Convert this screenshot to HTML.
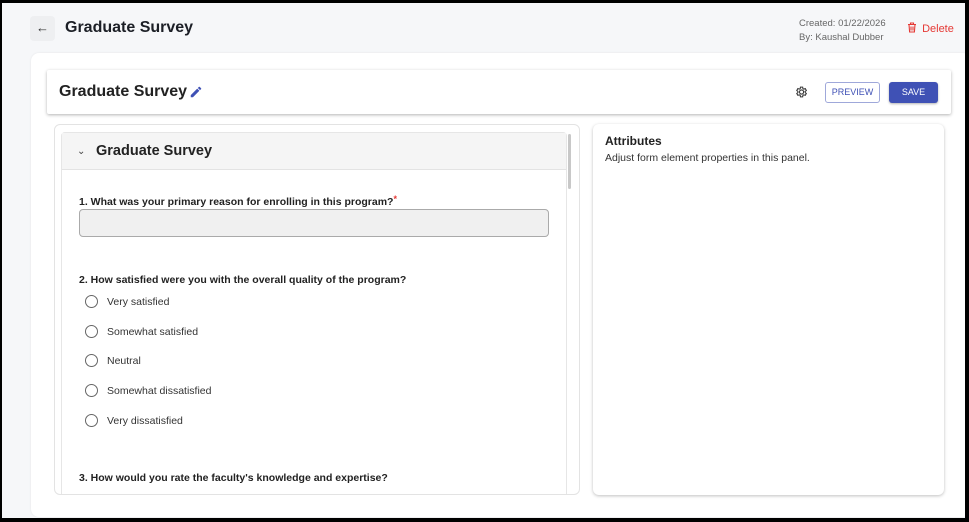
<!DOCTYPE html>
<html><head><style>
*{box-sizing:border-box;margin:0;padding:0}
body{width:969px;height:522px;overflow:hidden;font-family:"Liberation Sans",Arial,sans-serif;background:#000;position:relative}
.frame{position:absolute;left:2px;top:3px;width:963px;height:515px;background:#f6f7f9;overflow:hidden}
.abs{position:absolute}
</style></head><body>
<div class="frame">
  <div class="abs" style="left:28px;top:13px;width:25px;height:25px;background:#eeeff1;border-radius:4px;font-size:13px;color:#333;text-align:center;line-height:24px">←</div>
  <div class="abs" style="left:63px;top:16px;font-size:16px;font-weight:bold;color:#1c1f26">Graduate Survey</div>
  <div class="abs" style="left:797px;top:14px;font-size:9.5px;color:#666;line-height:14px">Created: 01/22/2026<br>By: Kaushal Dubber</div>
  <div class="abs" style="left:905px;top:19px;font-size:11px;color:#e53935">
    <svg width="10" height="11" viewBox="0 0 10 11" style="vertical-align:-1px"><path d="M1 2.5h8M3.5 2.5V1h3v1.5M2 2.5l.6 7.5h4.8L8 2.5M4 4.5v4M6 4.5v4" fill="none" stroke="#e53935" stroke-width="1.1"/></svg>
    <span style="margin-left:2px">Delete</span></div>
  <div class="abs" style="left:29px;top:50px;width:940px;height:464px;background:#fff;border-radius:8px;box-shadow:0 0 2px rgba(0,0,0,.08)"></div>
  <div class="abs" style="left:45px;top:67px;width:904px;height:44px;background:#fff;box-shadow:0 1px 3px rgba(0,0,0,.3);border-radius:2px"></div>
  <div class="abs" style="left:57px;top:80px;font-size:16px;font-weight:bold;color:#222">Graduate Survey</div>
  <svg class="abs" style="left:187px;top:82px" width="14" height="14" viewBox="0 0 24 24"><path d="M3 17.25V21h3.75L17.81 9.94l-3.75-3.75L3 17.25zM20.71 7.04a1 1 0 000-1.41l-2.34-2.34a1 1 0 00-1.41 0l-1.83 1.83 3.75 3.75 1.83-1.83z" fill="#3f51b5"/></svg>
  <svg class="abs" style="left:792px;top:82px" width="14" height="14" viewBox="0 0 24 24"><path d="M19.14 12.94a7 7 0 000-1.88l2.03-1.58-1.92-3.32-2.39.96a7 7 0 00-1.62-.94L14.87 3.6h-3.84l-.36 2.54c-.59.24-1.13.55-1.62.94l-2.39-.96-1.920 3.32 2.03 1.58a7 7 0 000 1.88l-2.03 1.58 1.92 3.32 2.39-.96c.49.39 1.03.7 1.62.94l.36 2.54h3.84l.36-2.54c.59-.24 1.13-.55 1.62-.94l2.39.96 1.92-3.32-2.03-1.58zM12.95 15.5a3.5 3.5 0 110-7 3.5 3.5 0 010 7z" fill="none" stroke="#333" stroke-width="1.8"/></svg>
  <div class="abs" style="left:823px;top:79px;width:55px;height:21px;border:1px solid #9fa8da;border-radius:3px;font-size:9px;color:#3f51b5;text-align:center;line-height:19px">PREVIEW</div>
  <div class="abs" style="left:887px;top:79px;width:49px;height:21px;background:#3f51b5;border-radius:3px;font-size:9px;color:#fff;text-align:center;line-height:21px;box-shadow:0 1px 2px rgba(0,0,0,.3)">SAVE</div>

  <div class="abs" style="left:52px;top:121px;width:526px;height:371px;border:1px solid #e3e3e3;border-radius:6px;background:#fff;overflow:hidden">
    <div class="abs" style="left:6px;top:7px;width:506px;height:370px;border:1px solid #e6e6e6;border-radius:4px">
      <div style="height:37px;background:#f5f5f5;border-bottom:1px solid #e3e3e3;font-size:14.5px;font-weight:bold;color:#222;line-height:37px;padding-left:34px;position:relative"><span style="position:absolute;left:15px;top:0;font-size:10px;font-weight:normal;color:#444">⌄</span>Graduate Survey</div>
    </div>
    <div class="abs" style="left:513px;top:9px;width:3px;height:55px;background:#c8c8c8;border-radius:2px"></div>
    <div class="abs" style="left:24px;top:69px;font-size:10.5px;font-weight:bold;color:#222">1. What was your primary reason for enrolling in this program?<span style="color:#e53935;font-size:9px;vertical-align:3px">*</span></div>
    <div class="abs" style="left:24px;top:84px;width:470px;height:28px;background:#f0f0f0;border:1px solid #aaa;border-radius:4px"></div>
    <div class="abs" style="left:24px;top:149px;font-size:10.5px;font-weight:bold;color:#222">2. How satisfied were you with the overall quality of the program?</div>
    <div class="abs" style="left:30px;top:163px;font-size:10.5px;color:#333;line-height:29.7px">
      <div><span style="display:inline-block;width:13px;height:13px;border:1.5px solid #666;border-radius:50%;vertical-align:-3px;margin-right:9px"></span>Very satisfied</div>
      <div><span style="display:inline-block;width:13px;height:13px;border:1.5px solid #666;border-radius:50%;vertical-align:-3px;margin-right:9px"></span>Somewhat satisfied</div>
      <div><span style="display:inline-block;width:13px;height:13px;border:1.5px solid #666;border-radius:50%;vertical-align:-3px;margin-right:9px"></span>Neutral</div>
      <div><span style="display:inline-block;width:13px;height:13px;border:1.5px solid #666;border-radius:50%;vertical-align:-3px;margin-right:9px"></span>Somewhat dissatisfied</div>
      <div><span style="display:inline-block;width:13px;height:13px;border:1.5px solid #666;border-radius:50%;vertical-align:-3px;margin-right:9px"></span>Very dissatisfied</div>
    </div>
    <div class="abs" style="left:24px;top:347px;font-size:10.5px;font-weight:bold;color:#222">3. How would you rate the faculty's knowledge and expertise?</div>
  </div>

  <div class="abs" style="left:591px;top:121px;width:351px;height:371px;background:#fff;border-radius:6px;box-shadow:0 1px 3px rgba(0,0,0,.25)">
    <div class="abs" style="left:12px;top:10px;font-size:12px;font-weight:bold;color:#222">Attributes</div>
    <div class="abs" style="left:12px;top:28px;font-size:10.5px;color:#333">Adjust form element properties in this panel.</div>
  </div>
</div>
</body></html>
